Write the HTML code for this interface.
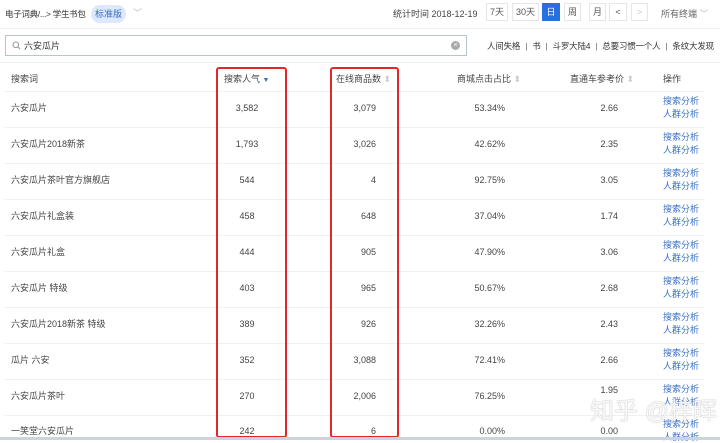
<!DOCTYPE html><html><head><meta charset="utf-8"><style>
*{margin:0;padding:0;box-sizing:border-box}
body{width:720px;height:440px;overflow:hidden;background:#fff;font-family:"Liberation Sans","Noto Sans CJK SC",sans-serif;font-size:9px;color:#444;position:relative}
.a{position:absolute;white-space:nowrap;line-height:12px}
.btn{position:absolute;top:3px;height:18px;border:1px solid #e3e6ea;font-size:9px;line-height:16px;text-align:center;color:#555}
.line{position:absolute;left:5px;width:700px;height:1px;background:#eef0f3}
.c{transform:translateX(-50%)}
.r{transform:translateX(-100%)}
.lk{color:#3a6fc4}
.box{position:absolute;border:2px solid #e0282a;border-radius:3px;top:67px;height:371px}
.sep{color:#666;margin:0 5px}
</style></head><body>
<div class="a" style="left:5px;top:8px;font-size:8.5px;letter-spacing:-0.3px;color:#333">电子词典/...&gt; 学生书包</div>
<div class="a" style="left:91px;top:5px;width:35px;height:18px;border-radius:9px;background:#dde8fb;color:#3a6fc4;line-height:18px;text-align:center">标准版</div>
<div class="a" style="left:133px;top:7px;color:#bbb">﹀</div>
<div class="a" style="left:393px;top:8px;color:#444">统计时间 2018-12-19</div>
<div class="btn" style="left:486px;width:22px">7天</div>
<div class="btn" style="left:512px;width:27px">30天</div>
<div class="btn" style="left:542px;width:18px;background:#2a6ee0;border-color:#2a6ee0;color:#fff">日</div>
<div class="btn" style="left:564px;width:17px">周</div>
<div class="btn" style="left:589px;width:17px">月</div>
<div class="btn" style="left:609px;width:18px">&lt;</div>
<div class="btn" style="left:631px;width:17px;color:#ccc">&gt;</div>
<div class="a" style="left:661px;top:8px;color:#666">所有终端 <span style="color:#bbb">﹀</span></div>
<div style="position:absolute;left:0;top:28px;width:720px;height:1px;background:#f0f0f0"></div>
<div style="position:absolute;left:5px;top:35px;width:462px;height:21px;border:1px solid #b8c4d0"></div>
<svg style="position:absolute;left:12px;top:41px" width="9" height="9" viewBox="0 0 9 9"><circle cx="3.8" cy="3.8" r="2.8" fill="none" stroke="#999" stroke-width="1"/><path d="M6 6L8 8" stroke="#999"/></svg>
<div class="a" style="left:24px;top:40px;color:#333">六安瓜片</div>
<div style="position:absolute;left:451px;top:41px;width:9px;height:9px;border-radius:50%;background:#aaa;color:#fff;font-size:7px;line-height:9px;text-align:center">×</div>
<div class="a" style="left:487px;top:40px;color:#333;font-size:8.5px;letter-spacing:-0.2px">人间失格<span class="sep">|</span>书<span class="sep">|</span>斗罗大陆4<span class="sep">|</span>总要习惯一个人<span class="sep">|</span>条纹大发现</div>
<div style="position:absolute;left:0;top:62px;width:720px;height:1px;background:#f3eeee"></div>
<div class="a" style="left:11px;top:73px">搜索词</div>
<div class="a" style="left:224px;top:73px">搜索人气 <span style="color:#3a6fc4;font-size:7px">▼</span></div>
<div class="a" style="left:336px;top:73px">在线商品数 <span style="color:#ccc">⬍</span></div>
<div class="a" style="left:457px;top:73px">商城点击占比 <span style="color:#ccc">⬍</span></div>
<div class="a" style="left:570px;top:73px">直通车参考价 <span style="color:#ccc">⬍</span></div>
<div class="a" style="left:663px;top:73px">操作</div>
<div class="line" style="top:91px"></div>
<div id="rows"></div>
<script>
var d=[["六安瓜片","3,582","3,079","53.34%","2.66"],["六安瓜片2018新茶","1,793","3,026","42.62%","2.35"],["六安瓜片茶叶官方旗舰店","544","4","92.75%","3.05"],["六安瓜片礼盒装","458","648","37.04%","1.74"],["六安瓜片礼盒","444","905","47.90%","3.06"],["六安瓜片 特级","403","965","50.67%","2.68"],["六安瓜片2018新茶 特级","389","926","32.26%","2.43"],["瓜片 六安","352","3,088","72.41%","2.66"],["六安瓜片茶叶","270","2,006","76.25%","1.95"],["一笑堂六安瓜片","242","6","0.00%","0.00"]];
var h="";d.forEach(function(r,i){var y=i==9?425:102+i*36;var oy=i==8?-6:0;
h+='<div class="a" style="left:11px;top:'+y+'px">'+r[0]+'</div>';
h+='<div class="a c" style="left:247px;top:'+y+'px">'+r[1]+'</div>';
h+='<div class="a r" style="left:376px;top:'+y+'px">'+r[2]+'</div>';
h+='<div class="a r" style="left:505px;top:'+y+'px">'+r[3]+'</div>';
h+='<div class="a r" style="left:618px;top:'+(y+oy)+'px">'+r[4]+'</div>';
h+='<div class="a lk" style="left:663px;top:'+(y-7)+'px">搜索分析</div><div class="a lk" style="left:663px;top:'+(y+6)+'px">人群分析</div>';
if(i<9)h+='<div class="line" style="top:'+(127+i*36)+'px"></div>';});
document.getElementById("rows").innerHTML=h;
</script>
<div class="box" style="left:216px;width:71px"></div>
<div class="box" style="left:330px;width:69px"></div>
<div class="a" style="left:590px;top:397px;font-size:24px;line-height:30px;color:rgba(255,255,255,.9);text-shadow:0 0 1px #bbb,0 0 1px #bbb">知乎 @梓晖</div>
<div style="position:absolute;left:0;top:437px;width:720px;height:3px;background:#c9d4de"></div>
</body></html>
